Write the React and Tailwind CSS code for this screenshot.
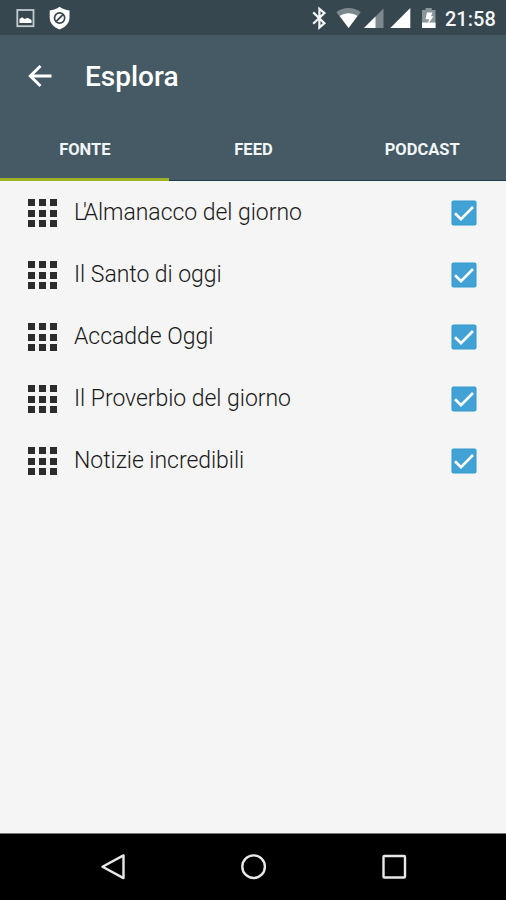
const sources = [
  { name: "L'Almanacco del giorno", lead: 2 },
  { name: "Il Santo di oggi", lead: 0 },
  { name: "Accadde Oggi", lead: 0 },
  { name: "Il Proverbio del giorno", lead: 0 },
  { name: "Notizie incredibili", lead: 0 },
];

function StatusBar() {
  return (
    <div className="flex h-[35px] shrink-0 items-start bg-[#37474f]">
      <svg width="90" height="35" viewBox="0 0 90 35">
        <rect x="17.3" y="10" width="16.2" height="16.2" fill="none" stroke="#c3cbd0" strokeWidth="1.8" />
        <path d="M19.5 23v-4l2.500-1.800 2.600 1.800 3-1.200 3.900 2.200v3z" fill="#fff" />
        <path d="M59.6 6.8c3 2.4 6.2 3.3 9.900 3.600v7.100c0 5.600-4.100 9.800-9.900 12-5.800-2.200-9.900-6.400-9.900-12v-7.100c3.700-.3 6.900-1.200 9.900-3.600z" fill="#fff" />
        <circle cx="59.600" cy="18" r="5.100" fill="none" stroke="#37474f" strokeWidth="1.700" />
        <path d="M56.500 21.200l6.200-6.400" stroke="#37474f" strokeWidth="1.800" />
      </svg>
      <svg className="ml-auto" width="145" height="35" viewBox="300 0 145 35">
        <path d="M313.200 12.400l11.200 10.800-5 4.300V8.800l5 4.200-11.200 10.800" fill="none" stroke="#f4f6f7" strokeWidth="2.200" />
        <path d="M336.300 12.300c7.500-5.600 17-5.600 24.500 0L348.600 28z" fill="#7c888e" />
        <path d="M339.700 16c5.600-3.700 12.300-3.700 17.700 0l-8.800 12z" fill="#fff" />
        <path d="M383.500 8.500V28H364z" fill="#7c888e" />
        <path d="M375.500 16.500V28H364z" fill="#fff" />
        <path d="M410.300 8v20h-20z" fill="#fff" />
        <path d="M422 10h3.500V8h6.300v2h3.700v18H422z" fill="#8a959a" />
        <path d="M422 22.500h13.500V28H422z" fill="#fff" />
        <path d="M427 12.500h5.500l-1.500 3.700h2.500l-5.500 8 .9-5h-3.400z" fill="#fff" />
      </svg>
      <span className="w-[61px] whitespace-nowrap pt-[7px] text-[20px] font-medium leading-6 text-[#f4f6f7]">21:58</span>
    </div>
  );
}

function GridIcon() {
  return (
    <span className="grid h-[28px] w-[29px] grid-cols-3 gap-x-[3.500px] gap-y-[3.500px]">
      {Array.from({ length: 9 }, (_, i) => (
        <span key={i} className="bg-[#2c2c2c]" />
      ))}
    </span>
  );
}

function Checkbox() {
  return (
    <svg width="26" height="26" viewBox="0 0 26 26">
      <rect x=".5" y=".5" width="25" height="25" rx="2" fill="#329bd0" />
      <rect x="1.500" y="1.500" width="23" height="23" rx="1" fill="#42a2d5" />
      <path d="M4 13.200l6 6L22 7" fill="none" stroke="#fff" strokeWidth="2.700" />
    </svg>
  );
}

export default function App() {
  return (
    <div className="flex h-[900px] w-[506px] flex-col overflow-hidden bg-[#f5f5f5] font-[Roboto,sans-serif]">
      <StatusBar />
      <header className="flex h-[146px] shrink-0 flex-col bg-[#455a64]">
        <div className="flex h-[83px] shrink-0 items-center pl-[28px]">
          <svg width="24" height="24" viewBox="0 0 24 24" fill="none" stroke="#fff" strokeWidth="2.900">
            <path d="M23.500 11H2.500M12.500 1L2.300 11l10.200 10" />
          </svg>
          <h1 className="ml-[33px] text-[28px] font-medium leading-8 text-white">Esplora</h1>
        </div>
        <nav className="grid h-[63px] shrink-0 grid-cols-3 grid-rows-1 text-center text-[16.500px] font-bold leading-[63px] text-[#f1f6f9]">
          <span className="h-full border-b-[3px] border-[#9eb324] pl-px">FONTE</span>
          <span className="h-full border-b border-[#1c3c4d] pl-px">FEED</span>
          <span className="h-full border-b border-[#1c3c4d] pl-px">PODCAST</span>
        </nav>
      </header>
      <main className="flex-1 pt-px">
        {sources.map(({ name, lead }) => (
          <div key={name} className="flex h-[62px] items-center pl-[28px] pr-[29px]">
            <GridIcon />
            <span className="ml-[17px] flex-1 whitespace-nowrap text-[23px] font-light text-[#1a1a1a] tracking-[-0.04px]">
              <span className="tracking-[-3.200px]">{name.slice(0, lead)}</span>
              {name.slice(lead)}
            </span>
            <Checkbox />
          </div>
        ))}
      </main>
      <footer className="flex h-[67px] shrink-0 items-center border-t border-[#777] bg-black">
        <svg width="506" height="66" viewBox="0 834 506 66" fill="none" stroke="#e8e8e8" strokeWidth="2.400" strokeLinejoin="round">
          <path d="M102.500 866.700l21-11.300v22.700z" />
          <circle cx="253.600" cy="866.700" r="11.300" />
          <rect x="383.500" y="856" width="21.500" height="21.500" rx="1" />
        </svg>
      </footer>
    </div>
  );
}
